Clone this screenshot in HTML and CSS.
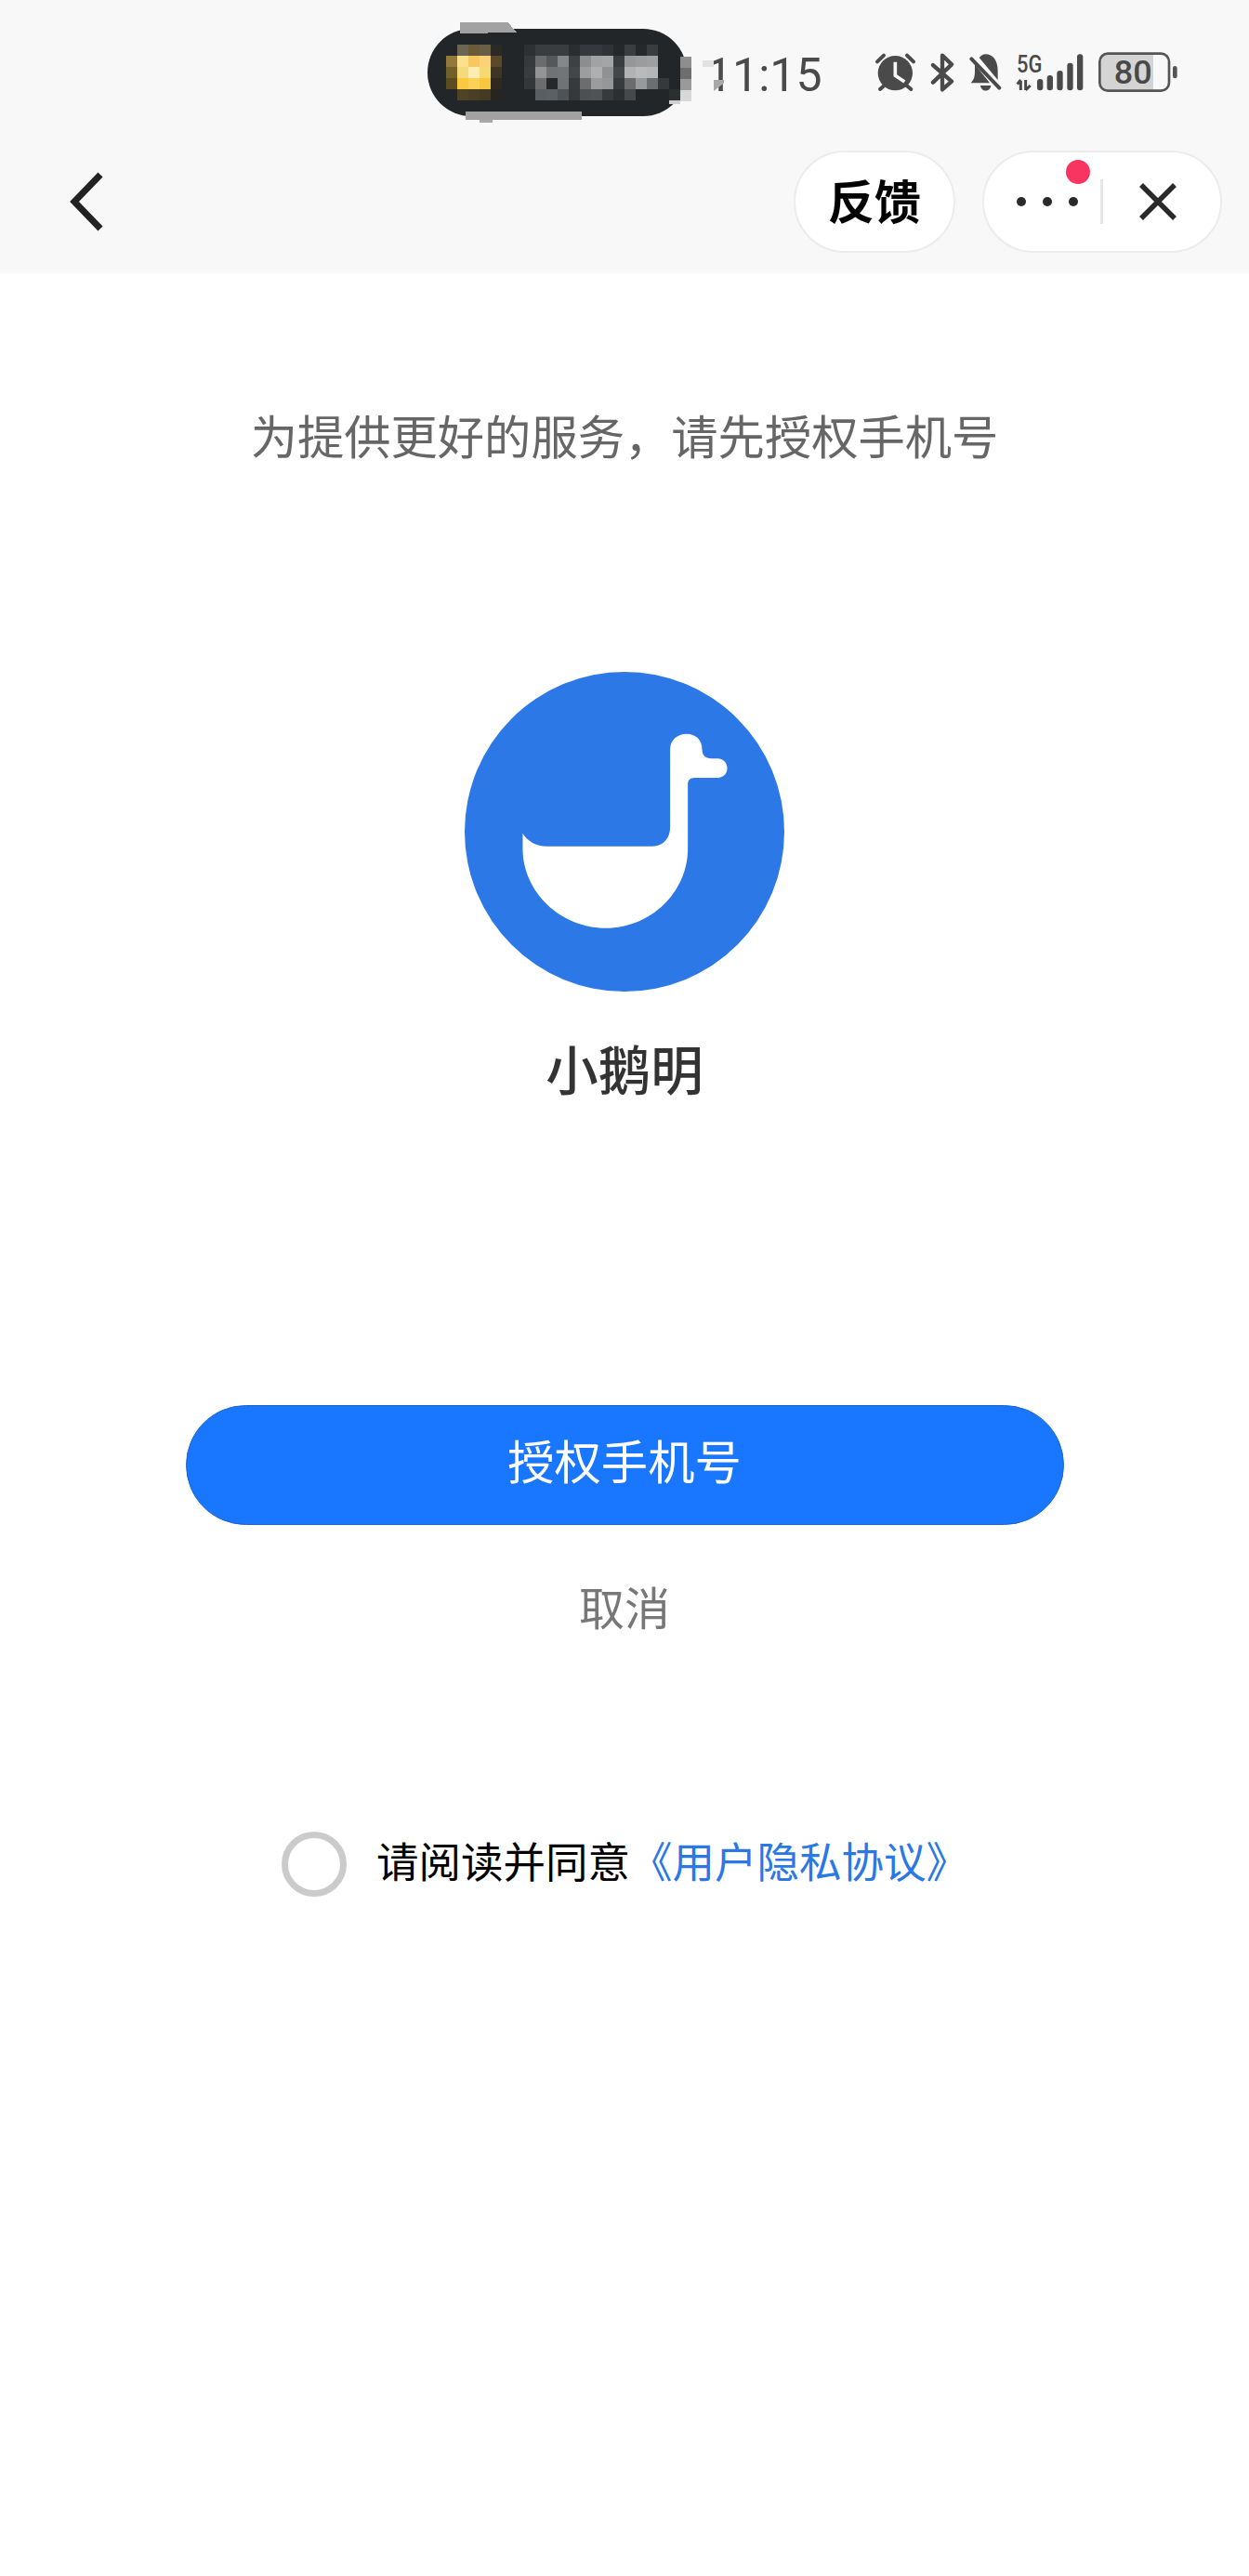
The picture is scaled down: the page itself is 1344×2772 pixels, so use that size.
FILE: index.html
```html
<!DOCTYPE html>
<html lang="zh-CN">
<head>
<meta charset="utf-8">
<title>授权手机号</title>
<link rel="stylesheet" href="styles.css">
</head>
<body>
<header class="top">
  <div class="status">
    <div class="island">
      <svg class="mosaic" viewBox="100 60 840 345" width="280" height="115" shape-rendering="crispEdges" aria-hidden="true">
        <polygon points="165,72 320,72 350,105 165,108" fill="#a2a2a2"/>
        <rect x="183" y="360" width="377" height="26" fill="#a2a2a2"/>
        <rect x="230" y="386" width="40" height="10" fill="#a8a8a8"/>
        <g>
          <rect x="156" y="144" width="36" height="36" fill="#6b6654"/><rect x="192" y="144" width="36" height="36" fill="#6a5a3a"/><rect x="228" y="144" width="36" height="36" fill="#6a5f45"/><rect x="264" y="144" width="36" height="36" fill="#2d2a25"/>
          <rect x="120" y="180" width="36" height="36" fill="#94773a"/><rect x="156" y="180" width="36" height="36" fill="#fbe08f"/><rect x="192" y="180" width="36" height="36" fill="#f8c75e"/><rect x="228" y="180" width="36" height="36" fill="#fbd277"/><rect x="264" y="180" width="36" height="36" fill="#5a4a28"/>
          <rect x="120" y="216" width="36" height="36" fill="#72602a"/><rect x="156" y="216" width="36" height="36" fill="#f5da7c"/><rect x="192" y="216" width="36" height="36" fill="#fbeeb0"/><rect x="228" y="216" width="36" height="36" fill="#f6d970"/><rect x="264" y="216" width="36" height="36" fill="#3f3522"/>
          <rect x="120" y="252" width="36" height="36" fill="#5b4c22"/><rect x="156" y="252" width="36" height="36" fill="#fbc93f"/><rect x="192" y="252" width="36" height="36" fill="#fdd155"/><rect x="228" y="252" width="36" height="36" fill="#f7c740"/><rect x="264" y="252" width="36" height="36" fill="#30291e"/>
          <rect x="156" y="288" width="36" height="36" fill="#4f4326"/><rect x="192" y="288" width="36" height="36" fill="#4a3e25"/><rect x="228" y="288" width="36" height="36" fill="#453a24"/><rect x="264" y="288" width="36" height="36" fill="#28241f"/>
        </g>
        <g>
          <rect x="372" y="144" width="36" height="36" fill="#2e3134"/><rect x="408" y="144" width="36" height="36" fill="#3a3d40"/><rect x="444" y="144" width="36" height="36" fill="#3a3d40"/><rect x="480" y="144" width="36" height="36" fill="#3a3d40"/><rect x="516" y="144" width="36" height="36" fill="#2a2e30"/><rect x="552" y="144" width="36" height="36" fill="#35393d"/><rect x="588" y="144" width="36" height="36" fill="#35393d"/><rect x="624" y="144" width="36" height="36" fill="#303336"/><rect x="660" y="144" width="36" height="36" fill="#24282a"/><rect x="696" y="144" width="36" height="36" fill="#3b3e41"/><rect x="732" y="144" width="36" height="36" fill="#26292b"/><rect x="768" y="144" width="36" height="36" fill="#3a3c40"/>
          <rect x="372" y="180" width="36" height="36" fill="#373a3c"/><rect x="408" y="180" width="36" height="36" fill="#6a6c6e"/><rect x="444" y="180" width="36" height="36" fill="#55585a"/><rect x="480" y="180" width="36" height="36" fill="#858789"/><rect x="516" y="180" width="36" height="36" fill="#3e4143"/><rect x="552" y="180" width="36" height="36" fill="#8b8d8f"/><rect x="588" y="180" width="36" height="36" fill="#a0a2a4"/><rect x="624" y="180" width="36" height="36" fill="#a3a5a7"/><rect x="660" y="180" width="36" height="36" fill="#3a3d3f"/><rect x="696" y="180" width="36" height="36" fill="#949698"/><rect x="732" y="180" width="36" height="36" fill="#9a9c9e"/><rect x="768" y="180" width="36" height="36" fill="#9d9fa1"/>
          <rect x="372" y="216" width="36" height="36" fill="#3a3c3e"/><rect x="408" y="216" width="36" height="36" fill="#929496"/><rect x="444" y="216" width="36" height="36" fill="#707274"/><rect x="480" y="216" width="36" height="36" fill="#727476"/><rect x="516" y="216" width="36" height="36" fill="#44474a"/><rect x="552" y="216" width="36" height="36" fill="#9b9d9f"/><rect x="588" y="216" width="36" height="36" fill="#adafb1"/><rect x="624" y="216" width="36" height="36" fill="#8f9193"/><rect x="660" y="216" width="36" height="36" fill="#44474a"/><rect x="696" y="216" width="36" height="36" fill="#b0b2b4"/><rect x="732" y="216" width="36" height="36" fill="#b8babc"/><rect x="768" y="216" width="36" height="36" fill="#b4b6b8"/>
          <rect x="372" y="252" width="36" height="36" fill="#34373a"/><rect x="408" y="252" width="36" height="36" fill="#6a6c6e"/><rect x="444" y="252" width="36" height="36" fill="#26292b"/><rect x="480" y="252" width="36" height="36" fill="#707274"/><rect x="516" y="252" width="36" height="36" fill="#363a3c"/><rect x="552" y="252" width="36" height="36" fill="#6b6d6f"/><rect x="588" y="252" width="36" height="36" fill="#9a9c9e"/><rect x="624" y="252" width="36" height="36" fill="#959799"/><rect x="660" y="252" width="36" height="36" fill="#383b3d"/><rect x="696" y="252" width="36" height="36" fill="#6a6c6e"/><rect x="732" y="252" width="36" height="36" fill="#979a9c"/><rect x="768" y="252" width="36" height="36" fill="#6c6e70"/><rect x="804" y="252" width="36" height="36" fill="#35393c"/>
          <rect x="408" y="288" width="36" height="36" fill="#595e62"/><rect x="444" y="288" width="36" height="36" fill="#5b6064"/><rect x="480" y="288" width="36" height="36" fill="#505356"/><rect x="516" y="288" width="36" height="36" fill="#36393c"/><rect x="552" y="288" width="36" height="36" fill="#4d5053"/><rect x="588" y="288" width="36" height="36" fill="#505356"/><rect x="624" y="288" width="36" height="36" fill="#373a3d"/><rect x="660" y="288" width="36" height="36" fill="#2c2f31"/><rect x="696" y="288" width="36" height="36" fill="#46494b"/><rect x="840" y="288" width="36" height="36" fill="#2c2f30"/>
        </g>
        <rect x="876" y="182" width="36" height="36" fill="#8e8e8e"/><rect x="876" y="218" width="36" height="36" fill="#6e6e6e"/><rect x="876" y="254" width="36" height="36" fill="#9a9a9a"/><rect x="876" y="290" width="36" height="36" fill="#d8d8d8"/>
        <rect x="840" y="324" width="36" height="12" fill="#cfcfcf"/>
      </svg>
    </div>
    <div class="clock">
      <span class="time">11:15</span>
      <span class="clock-patch-top"></span>
      <span class="clock-patch-bottom"></span>
    </div>
    <div class="status-icons">
      <svg class="ico ico-alarm" viewBox="128 113 129 126" aria-hidden="true">
        <circle cx="192" cy="178" r="56" fill="#4a4a4a"/>
        <path d="M192 142V186L222 206" fill="none" stroke="#f8f8f8" stroke-width="11"/>
        <path d="M134 141L155 121M230 121L251 141M143 230L160 215M243 230L225 215" fill="none" stroke="#4a4a4a" stroke-width="12" stroke-linecap="round"/>
      </svg>
      <svg class="ico ico-bt" viewBox="301 113 79 126" aria-hidden="true">
        <path d="M310 152L370 205L340 231V121L370 150L310 208" fill="none" stroke="#4a4a4a" stroke-width="13" stroke-linecap="round" stroke-linejoin="round"/>
      </svg>
      <svg class="ico ico-bell" viewBox="426 113 104 126" aria-hidden="true">
        <path d="M478 117C503 117 518 138 518 170V192ZM458 128C466 120 472 117 478 117L518 192V200L458 128ZM444 150L492 210H431C441 200 444 190 444 170Z" fill="#4a4a4a"/>
        <path d="M462 218H496C494 240 464 240 462 218Z" fill="#4a4a4a"/>
        <path d="M433 132L523 226" fill="none" stroke="#4a4a4a" stroke-width="12" stroke-linecap="round"/>
      </svg>
      <svg class="ico ico-signal" viewBox="575 113 217 126" aria-hidden="true">
        <text class="net" x="575" y="175" textLength="82" lengthAdjust="spacingAndGlyphs">5G</text>
        <path d="M588 204V233M604 200V233M577 214L588 200M604 233L619 218" fill="none" stroke="#4a4a4a" stroke-width="9"/>
        <rect x="641" y="197" width="19" height="37" rx="9" fill="#4a4a4a"/>
        <rect x="673" y="185" width="19" height="49" rx="9" fill="#4a4a4a"/>
        <rect x="705" y="170" width="19" height="64" rx="9" fill="#4a4a4a"/>
        <rect x="738" y="145" width="19" height="89" rx="9" fill="#4a4a4a"/>
        <rect x="770" y="117" width="19" height="117" rx="9" fill="#4a4a4a"/>
      </svg>
      <svg class="ico ico-batt" viewBox="838 113 256 126" aria-hidden="true">
        <path d="M868 117H1015V232H868C854 232 844 222 844 208V141C844 127 854 117 868 117Z" fill="#d4d4d4"/>
        <rect x="842" y="115" width="224" height="120" rx="26" fill="none" stroke="#555" stroke-width="8"/>
        <rect x="1078" y="155" width="14" height="40" rx="7" fill="#555"/>
        <text class="level" x="950" y="212" text-anchor="middle">80</text>
      </svg>
    </div>
  </div>
  <nav class="nav">
    <svg class="back" viewBox="0 0 40 66" aria-hidden="true">
      <path d="M34 4L6 33L34 62" fill="none" stroke="#222" stroke-width="7"/>
    </svg>
    <div class="pill feedback">反馈</div>
    <div class="pill capsule">
      <svg class="more" viewBox="0 0 66 10" aria-hidden="true">
        <circle cx="5" cy="5" r="5" fill="#2a2a2a"/><circle cx="33" cy="5" r="5" fill="#2a2a2a"/><circle cx="61" cy="5" r="5" fill="#2a2a2a"/>
      </svg>
      <span class="dot"></span>
      <span class="sep"></span>
      <svg class="close" viewBox="0 0 42 42" aria-hidden="true">
        <path d="M3 3L39 39M39 3L3 39" fill="none" stroke="#2a2a2a" stroke-width="5.5"/>
      </svg>
    </div>
  </nav>
</header>
<main class="page">
  <p class="lead">为提供更好的服务，请先授权手机号</p>
  <svg class="logo" viewBox="60 70 1030 1030" role="img" aria-label="小鹅明">
    <circle cx="575" cy="585" r="515" fill="#2c78e6"/>
    <path d="M247 590C262 615 290 632 325 632H665C700 632 722 605 722 570V320C722 290 745 270 775 270C805 270 825 290 825 320C825 340 838 349 855 349H875C893 349 906 362 906 380C906 398 893 411 875 411H800C785 411 779 420 779 432V640C779 780 660 896 515 896C370 896 247 780 247 640Z" fill="#fff"/>
  </svg>
  <h1 class="name">小鹅明</h1>
  <button class="primary" type="button">授权手机号</button>
  <div class="cancel">取消</div>
  <div class="agree">
    <span class="radio"></span>
    <span class="agree-text">请阅读并同意<a class="link">《用户隐私协议》</a></span>
  </div>
</main>
</body>
</html>
```
FILE: styles.css
```css
* { box-sizing: border-box; }
html, body { margin: 0; padding: 0; background: #fff; }
body {
  width: 1344px;
  height: 2772px;
  overflow: hidden;
  font-family: "Noto Sans CJK SC", "Noto Sans", sans-serif;
}

.top { height: 294px; background: #f8f8f8; padding-top: 31px; }

.status { display: flex; align-items: center; height: 94px; padding-left: 460px; }
.island { position: relative; width: 279px; height: 94px; border-radius: 47px; background: #222628; flex: none; }
.mosaic { position: absolute; left: 13px; top: -11px; overflow: visible; }

.clock { position: relative; margin-left: 21px; width: 124px; height: 50px; flex: none; }
.time {
  display: block;
  font-family: Roboto, sans-serif;
  font-size: 50px;
  line-height: 50px;
  color: #4a4a4a;
  margin-top: 3px;
}
.clock-patch-top { position: absolute; left: -4px; top: 12px; width: 12px; height: 7px; background: #e2e2e2; }
.clock-patch-bottom { position: absolute; left: 8px; top: 33px; width: 11px; height: 12px; background: #a8a8a8; clip-path: polygon(100% 0, 100% 30%, 0 100%, 0 0); }

.status-icons { display: flex; align-items: center; gap: 16px; margin-left: 58px; }
.ico { height: 42px; display: block; flex: none; overflow: visible; }
.ico-alarm { width: 43px; }
.ico-bt { width: 26.33px; }
.ico-bell { width: 34.67px; }
.ico-signal { width: 72.33px; }
.ico-batt { width: 85.33px; }
.net { font-family: Roboto, sans-serif; font-weight: 500; font-size: 78px; fill: #4a4a4a; }
.level { font-family: Roboto, sans-serif; font-weight: 500; font-size: 108px; fill: #484848; }

.nav { display: flex; align-items: center; height: 110px; margin-top: 37px; padding-left: 74px; }
.back { width: 40px; height: 66px; flex: none; display: block; }

.pill {
  height: 110px;
  border-radius: 55px;
  background: #fff;
  border: 2px solid #ececec;
  flex: none;
}
.feedback {
  width: 174px;
  margin-left: 740px;
  text-align: center;
  font-size: 50px;
  font-weight: 700;
  line-height: 101px;
  color: #000;
}
.capsule {
  position: relative;
  width: 258px;
  margin-left: 29px;
  display: flex;
  align-items: center;
  padding-left: 35px;
}
.more { width: 66px; height: 10px; display: block; flex: none; }
.dot { position: absolute; left: 88px; top: 8px; width: 26px; height: 26px; border-radius: 50%; background: #f83560; }
.sep { width: 3px; height: 48px; background: #e6e6e6; margin-left: 24px; flex: none; }
.close { width: 42px; height: 42px; margin-left: 38px; display: block; flex: none; }

.page { display: flex; flex-direction: column; align-items: center; }
.lead { margin: 143px 0 0; font-size: 50.3px; line-height: 60px; color: #666; font-weight: 400; }
.logo { width: 344px; height: 344px; margin-top: 226px; display: block; flex: none; }
.name { margin: 46px 0 0; font-size: 56.5px; line-height: 70px; font-weight: 500; color: #333; }
.primary {
  width: 945px;
  height: 129px;
  margin-top: 329px;
  border: 1px solid #1a66cf;
  border-radius: 65px;
  background: #1876ff;
  color: #fff;
  font-family: inherit;
  font-size: 50.3px;
  line-height: 60px;
  padding: 0 0 13px;
}
.cancel { margin-top: 57px; font-size: 49px; line-height: 60px; color: #777; }
.agree { display: flex; align-items: center; margin-top: 213px; margin-left: 1px; }
.radio { width: 70px; height: 70px; border-radius: 50%; border: 7px solid #cbcbcb; flex: none; }
.agree-text { margin-left: 32px; font-size: 45.5px; line-height: 60px; color: #000; position: relative; top: -5px; }
.link { color: #2a78e4; }
```
